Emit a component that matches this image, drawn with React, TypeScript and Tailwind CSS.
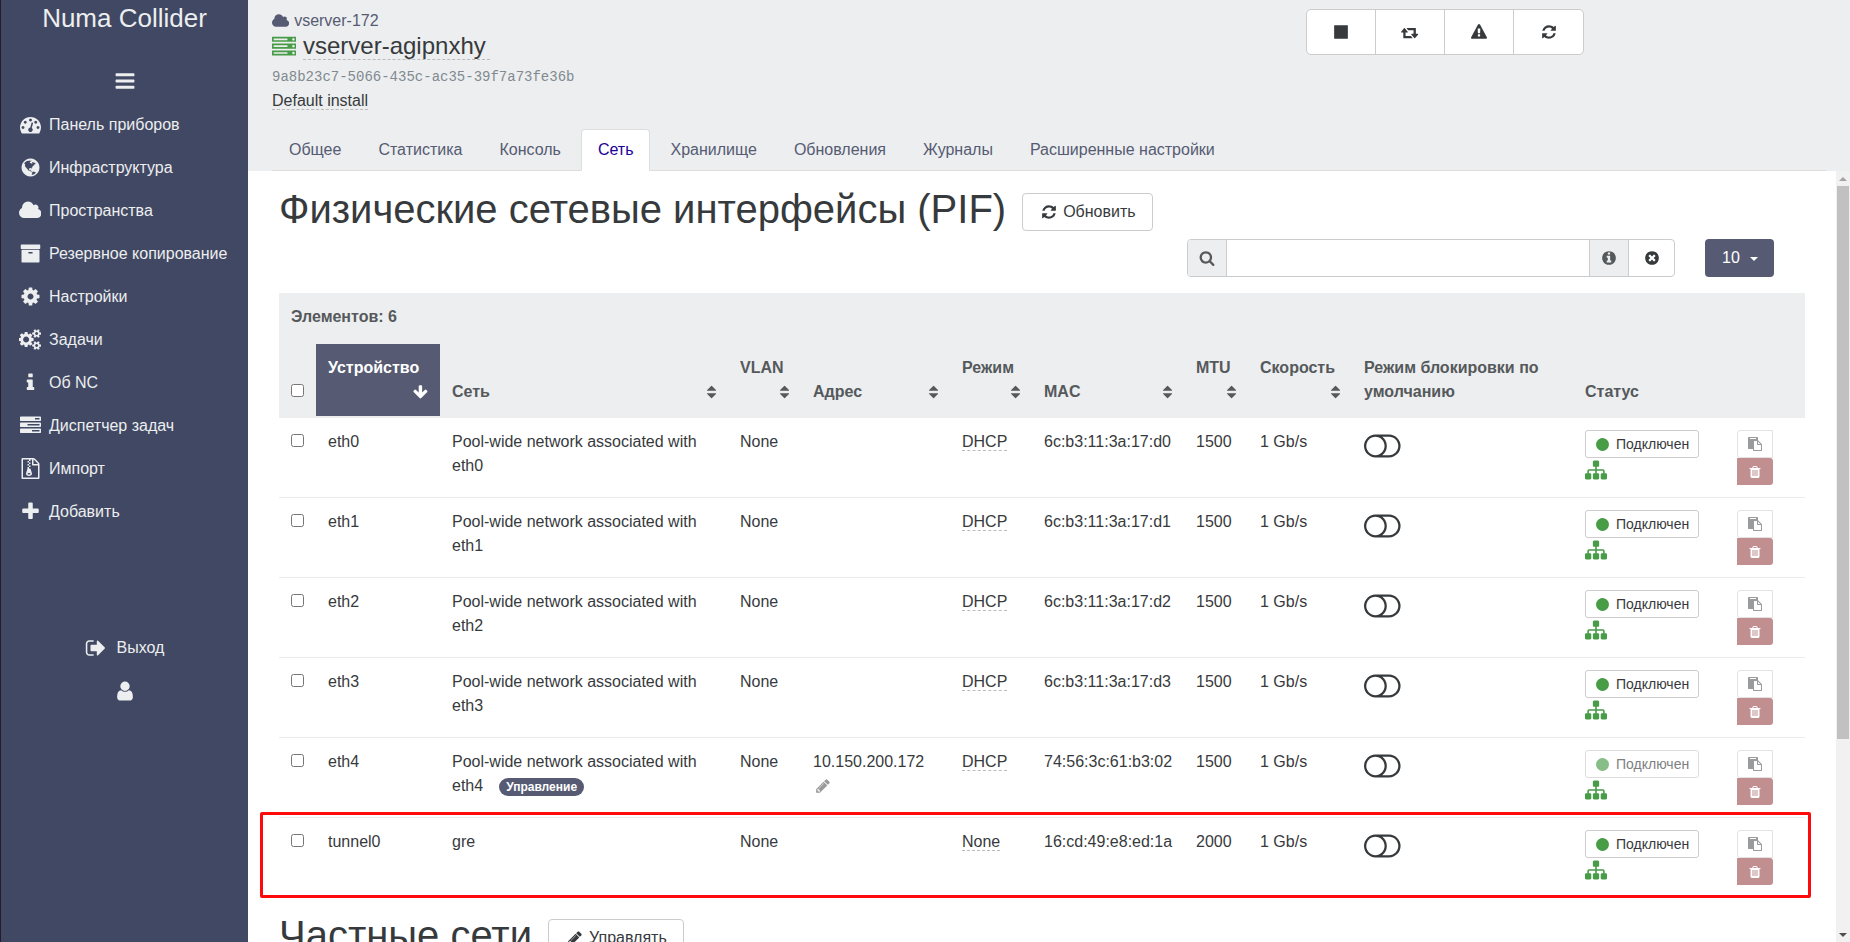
import type { ReactNode } from 'react';

// [path, left edge of the view box, width of the view box]
type Glyph = [string, number, number];

const glyphs = {
  cloud: [
    'M1984 1152q0 159-112.5 271.5t-271.5 112.5h-1088q-185 0-316.5-131.5t-131.5-316.5q0-132 71-241.5t187-163.5q-2-28-2-43 0-212 150-362t362-150q158 0 286.5 88t187.5 230q70-62 166-62 106 0 181 75t75 181q0 75-41 138 129 30 213 134.5t84 239.5z',
    64, 1920,
  ],
  refresh: [
    'M1639 1056q0 5-1 7-64 268-268 434.5t-478 166.5q-146 0-282.5-55t-243.5-157l-129 129q-19 19-45 19t-45-19-19-45v-448q0-26 19-45t45-19h448q26 0 45 19t19 45-19 45l-137 137q71 66 161 102t187 36q134 0 250-65t186-179q11-17 53-117 8-23 30-23h192q13 0 22.5 9.5t9.5 22.5zm25-800v448q0 26-19 45t-45 19h-448q-26 0-45-19t-19-45 19-45l138-138q-148-137-349-137-134 0-250 65t-186 179q-11 17-53 117-8 23-30 23h-199q-13 0-22.5-9.5t-9.5-22.5v-7q65-268 270-434.5t480-166.5q146 0 284 55.5t245 156.5l130-129q19-19 45-19t45 19 19 45z',
    0, 1792,
  ],
  search: [
    'M1216 832q0-185-131.5-316.5t-316.5-131.5-316.5 131.5-131.5 316.5 131.5 316.5 316.5 131.5 316.5-131.5 131.5-316.5zm512 832q0 52-38 90t-90 38q-54 0-90-38l-343-342q-179 124-399 124-143 0-273.5-55.5t-225-150-150-225-55.5-273.5 55.5-273.5 150-225 225-150 273.5-55.5 273.5 55.5 225 150 150 225 55.5 273.5q0 220-124 399l343 343q37 37 37 90z',
    0, 1792,
  ],
  cog: [
    'M1152 896q0-106-75-181t-181-75-181 75-75 181 75 181 181 75 181-75 75-181zm512-109v222q0 12-8 23t-20 13l-185 28q-19 54-39 91 35 50 107 138 10 12 10 25t-9 23q-27 37-99 108t-94 71q-12 0-26-9l-138-108q-44 23-91 38-16 136-29 186-7 28-36 28h-222q-14 0-24.5-8.5t-11.5-21.5l-28-184q-49-16-90-37l-141 107q-10 9-25 9-14 0-25-11-126-114-165-168-7-10-7-23 0-12 8-23 15-21 51-66.5t54-70.5q-27-50-41-99l-183-27q-13-2-21-12.5t-8-23.5v-222q0-12 8-23t19-13l186-28q14-46 39-92-40-57-107-138-10-12-10-24 0-10 9-23 26-36 98.5-107.5t94.5-71.5q13 0 26 10l138 107q44-23 91-38 16-136 29-186 7-28 36-28h222q14 0 24.5 8.5t11.5 21.5l28 184q49 16 90 37l142-107q9-9 24-9 13 0 25 10 129 119 165 170 7 8 7 22 0 12-8 23-15 21-51 66.5t-54 70.5q26 50 41 98l183 28q13 2 21 12.5t8 23.5z',
    0, 1792,
  ],
  dashboard: [
    'M384 1152q0-53-37.5-90.5t-90.5-37.5-90.5 37.5-37.5 90.5 37.5 90.5 90.5 37.5 90.5-37.5 37.5-90.5zm192-448q0-53-37.5-90.5t-90.5-37.5-90.5 37.5-37.5 90.5 37.5 90.5 90.5 37.5 90.5-37.5 37.5-90.5zm428 481l101-382q6-26-7.5-48.5t-38.5-29.5-48 6.5-30 39.5l-101 382q-60 5-107 43.5t-63 98.5q-20 77 20 146t117 89 146-20 89-117q16-60-6-117t-72-91zm660-33q0-53-37.5-90.5t-90.5-37.5-90.5 37.5-37.5 90.5 37.5 90.5 90.5 37.5 90.5-37.5 37.5-90.5zm-640-640q0-53-37.5-90.5t-90.5-37.5-90.5 37.5-37.5 90.5 37.5 90.5 90.5 37.5 90.5-37.5 37.5-90.5zm448 192q0-53-37.5-90.5t-90.5-37.5-90.5 37.5-37.5 90.5 37.5 90.5 90.5 37.5 90.5-37.5 37.5-90.5zm320 448q0 261-141 483-19 29-54 29h-1402q-35 0-54-29-141-221-141-483 0-182 71-348t191-286 286-191 348-71 348 71 286 191 191 286 71 348z',
    0, 1792,
  ],
  globe: [
    'M896 128q209 0 385.5 103t279.5 279.5 103 385.5-103 385.5-279.5 279.5-385.5 103-385.5-103-279.5-279.5-103-385.5 103-385.5 279.5-279.5 385.5-103zm274 521q-2 1-9.5 9.5t-13.5 9.5q2 0 4.5-5t5-11 3.5-7q6-7 22-15 14-6 52-12 34-8 51 11-2-2 9.5-13t14.5-12q3-2 15-4.5t15-7.5l2-22q-12 1-17.5-7t-6.5-21q0 2-6 8 0-7-4.5-8t-11.5 1-9 1q-10-3-15-7.5t-8-16.5-4-15q-2-5-9.5-11t-9.5-10q-1-2-2.5-5.5t-3-6.5-4-5.5-5.5-2.5-7 5-7.5 10-4.5 5q-3-2-6-1.5t-4.5 1-4.5 3-5 3.5q-3 2-8.5 3t-8.5 2q15-5-1-11-10-4-16-3 9-4 7.5-12t-8.5-14h5q-1-4-8.5-8.5t-17.5-8.5-13-6q-8-5-34-9.5t-33-.5q-5 6-4.5 10.5t4 14 3.5 12.5q1 6-5.5 13t-6.5 12q0 7 14 15.5t10 21.5q-3 8-16 16t-16 12q-5 8-1.5 18.5t10.5 16.5q2 2 1.5 4t-3.5 4.5-5.5 4-6.5 3.5l-3 2q-11 5-20.5-6t-13.5-26q-7-25-16-30-23-8-29 1-5-13-41-26-25-9-58-4 6-1 0-15-7-15-19-12 3-6 4-17.5t1-13.5q3-13 12-23 1-1 7-8.5t9.5-13.5.5-6q35 4 50-11 5-5 11.5-17t10.5-17q9-6 14-5.5t14.5 5.5 14.5 5q14 1 15.5-11t-7.5-20q12 1 3-17-4-7-8-9-12-4-27 5-8 4 2 8-1-1-9.5 10.5t-16.5 17.5-16-5q-1-1-5.5-13.5t-9.5-13.5q-8 0-16 15 3-8-11-15t-24-8q19-12-8-27-7-4-20.5-5t-19.5 4q-5 7-5.5 11.5t5 8 10.5 5.5 11.5 4 8.5 3q14 10 8 14-2 1-8.5 3.5t-11.5 4.5-6 4q-3 4 0 14t-2 14q-5-5-9-17.5t-7-16.5q7 9-25 6l-10-1q-4 0-16 2t-20.5 1-13.5-8q-4-8 0-20 1-4 4-2-4-3-11-9.5t-10-8.5q-46 15-94 41 6 1 12-1 5-2 13-6.5t10-5.5q34-14 42-7l5-5q14 16 20 25-7-4-30-1-20 6-22 12 7 12 5 18-4-3-11.5-10t-14.5-11-15-5q-16 0-22 1-146 80-235 222 7 7 12 8 4 1 5 9t2.5 11 11.5-3q9 8 3 19 1-1 44 27 19 17 21 21 3 11-10 18-1-2-9-9t-9-4q-3 5 .5 18.5t10.5 12.5q-7 0-9.5 16t-2.5 35.5-1 23.5l2 1q-3 12 5.5 34.5t21.5 19.5q-13 3 20 43 6 8 8 9 3 2 12 7.5t15 10 10 10.5q4 5 10 22.5t14 23.5q-2 6 9.5 20t10.5 23q-1 0-2.5 1t-2.5 1q3 7 15.5 14t15.5 13q1 3 2 10t3 11 8 2q2-20-24-62-15-25-17-29-3-5-5.5-15.5t-4.5-14.5q2 0 6 1.5t8.5 3.5 7.5 4 2 3q-3 7 2 17.5t12 18.5 17 19 12 13q6 6 14 19.5t0 13.5q9 0 20 10.5t17 19.5q5 8 8 26t5 24q2 7 8.5 13.5t12.5 9.5l16 8 13 7q5 2 18.5 10.5t21.5 11.5q10 4 16 4t14.5-2.5 13.5-3.5q15-2 29 15t21 21q36 19 55 11-2 1 .5 7.5t8 15.5 9 14.5 5.5 8.5q5 6 18 15t18 15q6-4 7-9-3 8 7 20t18 10q14-3 14-32-31 15-49-18 0-1-2.5-5.5t-4-8.5-2.5-8.5 0-7.5 5-3q9 0 10-3.5t-2-12.5-4-13q-1-8-11-20t-12-15q-5 9-16 8t-16-9q0 1-1.5 5.5t-1.5 6.5q-13 0-15-1 1-3 2.5-17.5t3.5-22.5q1-4 5.5-12t7.5-14.5 4-12.5-4.5-9.5-17.5-2.5q-19 1-26 20-1 3-3 10.5t-5 11.5-9 7q-7 3-24 2t-24-5q-13-8-22.5-29t-9.5-37q0-10 2.5-26.5t3-25-5.5-24.5q3-2 9-9.5t10-10.5q2-1 4.5-1.5t4.5 0 4-1.5 3-6q-1-1-4-3-3-3-4-3 7 3 28.5-1.5t27.5 1.5q15 11 22-2 0-1-2.5-9.5t-.5-13.5q5 27 29 9 3 3 15.5 5t17.5 5q3 2 7 5.5t5.5 4.5 5-.5 8.5-6.5q10 14 12 24 11 40 19 44 7 3 11 2t4.5-9.5 0-14-1.5-12.5l-1-8v-18l-1-8q-15-3-18.5-12t1.5-18.5 15-18.5q1-1 8-3.5t15.5-6.5 12.5-8q21-19 15-35 7 0 11-9-1 0-5-3t-7.5-5-4.5-2q9-5 2-16 5-3 7.5-11t7.5-10q9 12 21 2 7-8 1-16 5-7 20.5-10.5t18.5-9.5q7 2 8-2t1-12 3-12q4-5 15-9t13-5l17-11q3-4 0-4 18 2 31-11 10-11-6-20 3-6-3-9.5t-15-5.5q3-1 11.5-.5t10.5-1.5q15-10-7-16-17-5-43 12zm-163 877q206-36 351-189-3-3-12.5-4.5t-12.5-3.5q-18-7-24-8 1-7-2.5-13t-8-9-12.5-8-11-7q-2-2-7-6t-7-5.5-7.5-4.5-8.5-2-10 1l-3 1q-3 1-5.5 2.5t-5.5 3-4 3 0 2.5q-21-17-36-22-5-1-11-5.5t-10.5-7-10-1.5-11.5 7q-5 5-6 15t-2 13q-7-5 0-17.5t2-18.5q-3-6-10.5-4.5t-12 4.5-11.5 8.5-9 6.5-8.5 5.5-8.5 7.5q-3 4-6 12t-5 11q-2-4-11.5-6.5t-9.5-5.5q2 10 4 35t5 38q7 31-12 48-27 25-29 40-4 22 12 26 0 7-8 20.5t-7 21.5q0 6 2 16z',
    0, 1792,
  ],
  server: [
    'M128 1408h1024v-128h-1024v128zm0-512h1024v-128h-1024v128zm1568 448q0-40-28-68t-68-28-68 28-28 68 28 68 68 28 68-28 28-68zm-1568-960h1024v-128h-1024v128zm1568 448q0-40-28-68t-68-28-68 28-28 68 28 68 68 28 68-28 28-68zm0-512q0-40-28-68t-68-28-68 28-28 68 28 68 68 28 68-28 28-68zm96 832v384h-1792v-384h1792zm0-512v384h-1792v-384h1792zm0-512v384h-1792v-384h1792z',
    0, 1792,
  ],
  tasks: [
    'M1024 1408h640v-128h-640v128zm-384-512h1024v-128h-1024v128zm640-512h384v-128h-384v128zm512 832v256q0 26-19 45t-45 19h-1664q-26 0-45-19t-19-45v-256q0-26 19-45t45-19h1664q26 0 45 19t19 45zm0-512v256q0 26-19 45t-45 19h-1664q-26 0-45-19t-19-45v-256q0-26 19-45t45-19h1664q26 0 45 19t19 45zm0-512v256q0 26-19 45t-45 19h-1664q-26 0-45-19t-19-45v-256q0-26 19-45t45-19h1664q26 0 45 19t19 45z',
    0, 1792,
  ],
  archive: [
    'M1088 832q0-26-19-45t-45-19h-256q-26 0-45 19t-19 45 19 45 45 19h256q26 0 45-19t19-45zm576-192v960q0 26-19 45t-45 19h-1408q-26 0-45-19t-19-45v-960q0-26 19-45t45-19h1408q26 0 45 19t19 45zm64-448v256q0 26-19 45t-45 19h-1536q-26 0-45-19t-19-45v-256q0-26 19-45t45-19h1536q26 0 45 19t19 45z',
    0, 1792,
  ],
  cogs: [
    'M832 896q0-106-75-181t-181-75-181 75-75 181 75 181 181 75 181-75 75-181zm768 512q0-52-38-90t-90-38-90 38-38 90q0 53 37.5 90.5t90.5 37.5 90.5-37.5 37.5-90.5zm0-1024q0-52-38-90t-90-38-90 38-38 90q0 53 37.5 90.5t90.5 37.5 90.5-37.5 37.5-90.5zm-384 421v185q0 10-7 19.5t-16 10.5l-155 24q-11 35-32 76 34 48 90 115 7 11 7 20 0 12-7 19-23 30-82.5 89.5t-78.5 59.5q-11 0-21-7l-115-90q-37 19-77 31-11 108-23 155-7 24-30 24h-186q-11 0-20-7.5t-10-17.5l-23-153q-34-10-75-31l-118 89q-7 7-20 7-11 0-21-8-144-133-144-160 0-9 7-19 10-14 41-53t47-61q-23-44-35-82l-152-24q-10-1-17-9.5t-7-19.5v-185q0-10 7-19.5t16-10.5l155-24q11-35 32-76-34-48-90-115-7-11-7-20 0-12 7-20 22-30 82-89t79-59q11 0 21 7l115 90q34-18 77-32 11-108 23-154 7-24 30-24h186q11 0 20 7.5t10 17.5l23 153q34 10 75 31l118-89q8-7 20-7 11 0 21 8 144 133 144 160 0 8-7 19-12 16-42 54t-45 60q23 48 34 82l152 23q10 2 17 10.5t7 19.5zm640 533v140q0 16-149 31-12 27-30 52 51 113 51 138 0 4-4 7-122 71-124 71-8 0-46-47t-52-68q-20 2-30 2t-30-2q-14 21-52 68t-46 47q-2 0-124-71-4-3-4-7 0-25 51-138-18-25-30-52-149-15-149-31v-140q0-16 149-31 13-29 30-52-51-113-51-138 0-4 4-7 4-2 35-20t59-34 30-16q8 0 46 46.5t52 67.5q20-2 30-2t30 2q51-71 92-112l6-2q4 0 124 70 4 3 4 7 0 25-51 138 17 23 30 52 149 15 149 31zm0-1024v140q0 16-149 31-12 27-30 52 51 113 51 138 0 4-4 7-122 71-124 71-8 0-46-47t-52-68q-20 2-30 2t-30-2q-14 21-52 68t-46 47q-2 0-124-71-4-3-4-7 0-25 51-138-18-25-30-52-149-15-149-31v-140q0-16 149-31 13-29 30-52-51-113-51-138 0-4 4-7 4-2 35-20t59-34 30-16q8 0 46 46.5t52 67.5q20-2 30-2t30 2q51-71 92-112l6-2q4 0 124 70 4 3 4 7 0 25-51 138 17 23 30 52 149 15 149 31z',
    -32, 1920,
  ],
  info: [
    'M1216 1344v128q0 26-19 45t-45 19h-512q-26 0-45-19t-19-45v-128q0-26 19-45t45-19h64v-384h-64q-26 0-45-19t-19-45v-128q0-26 19-45t45-19h384q26 0 45 19t19 45v576h64q26 0 45 19t19 45zm-128-1152v192q0 26-19 45t-45 19h-256q-26 0-45-19t-19-45v-192q0-26 19-45t45-19h256q26 0 45 19t19 45z',
    0, 1792,
  ],
  fileArchive: [
    'M768 384v-128h-128v128h128zm128 128v-128h-128v128h128zm-128 128v-128h-128v128h128zm128 128v-128h-128v128h128zm700-388q28 28 48 76t20 88v1152q0 40-28 68t-68 28h-1344q-40 0-68-28t-28-68v-1600q0-40 28-68t68-28h896q40 0 88 20t76 48zm-444-244v376h376q-10-29-22-41l-313-313q-12-12-41-22zm384 1528v-1024h-416q-40 0-68-28t-28-68v-416h-128v128h-128v-128h-512v1536h1280zm-627-721l107 349q8 27 8 52 0 83-72.5 137.5t-183.5 54.5-183.5-54.5-72.5-137.5q0-25 8-52 21-63 120-396v-128h128v128h79q22 0 39 13t23 34zm-141 465q53 0 90.5-19t37.5-45-37.5-45-90.5-19-90.5 19-37.5 45 37.5 45 90.5 19z',
    0, 1792,
  ],
  plus: [
    'M1600 736v192q0 40-28 68t-68 28h-416v416q0 40-28 68t-68 28h-192q-40 0-68-28t-28-68v-416h-416q-40 0-68-28t-28-68v-192q0-40 28-68t68-28h416v-416q0-40 28-68t68-28h192q40 0 68 28t28 68v416h416q40 0 68 28t28 68z',
    0, 1792,
  ],
  signOut: [
    'M704 1440q0 4 1 20t.5 26.5-3 23.5-10 19.5-20.5 6.5h-320q-119 0-203.5-84.5t-84.5-203.5v-704q0-119 84.5-203.5t203.5-84.5h320q13 0 22.5 9.5t9.5 22.5q0 4 1 20t.5 26.5-3 23.5-10 19.5-20.5 6.5h-320q-66 0-113 47t-47 113v704q0 66 47 113t113 47h312l11.5 1 11.5 3 8 5.5 7 9 2 13.5zm928-544q0 26-19 45l-544 544q-19 19-45 19t-45-19-19-45v-288h-448q-26 0-45-19t-19-45v-384q0-26 19-45t45-19h448v-288q0-26 19-45t45-19 45 19l544 544q19 19 19 45z',
    0, 1792,
  ],
  user: [
    'M1536 1399q0 109-62.5 187t-150.5 78h-854q-88 0-150.5-78t-62.5-187q0-85 8.5-160.5t31.5-152 58.5-131 94-89 134.5-34.5q131 128 313 128t313-128q76 0 134.5 34.5t94 89 58.5 131 31.5 152 8.5 160.5zm-256-887q0 159-112.5 271.5t-271.5 112.5-271.5-112.5-112.5-271.5 112.5-271.5 271.5-112.5 271.5 112.5 112.5 271.5z',
    0, 1792,
  ],
  bars: [
    'M1664 1344v128q0 26-19 45t-45 19h-1408q-26 0-45-19t-19-45v-128q0-26 19-45t45-19h1408q26 0 45 19t19 45zm0-512v128q0 26-19 45t-45 19h-1408q-26 0-45-19t-19-45v-128q0-26 19-45t45-19h1408q26 0 45 19t19 45zm0-512v128q0 26-19 45t-45 19h-1408q-26 0-45-19t-19-45v-128q0-26 19-45t45-19h1408q26 0 45 19t19 45z',
    0, 1792,
  ],
  stop: ['M1664 192v1408q0 26-19 45t-45 19h-1408q-26 0-45-19t-19-45v-1408q0-26 19-45t45-19h1408q26 0 45 19t19 45z', 0, 1792],
  retweet: [
    'M1216 1568q0 13-9.5 22.5t-22.5 9.5h-960q-8 0-13.5-2t-9-7-5.5-8-3-11.5-1-11.5v-600h-192q-26 0-45-19t-19-45q0-24 15-41l320-384q19-22 49-22t49 22l320 384q15 17 15 41 0 26-19 45t-45 19h-192v384h576q16 0 25 11l160 192q7 10 7 21zm640-416q0 24-15 41l-320 384q-20 23-49 23t-49-23l-320-384q-15-17-15-41 0-26 19-45t45-19h192v-384h-576q-16 0-25-12l-160-192q-7-9-7-20 0-13 9.5-22.5t22.5-9.5h960q8 0 13.5 2t9 7 5.5 8 3 11.5 1 11.5v600h192q26 0 45 19t19 45z',
    -64, 1920,
  ],
  warning: [
    'M1024 1375v-190q0-14-9.5-23.5t-22.5-9.5h-192q-13 0-22.5 9.5t-9.5 23.5v190q0 14 9.5 23.5t22.5 9.5h192q13 0 22.5-9.5t9.5-23.5zm-2-374l18-459q0-12-10-19-13-11-24-11h-220q-11 0-24 11-10 7-10 21l17 457q0 10 10 16.5t24 6.5h185q14 0 23.5-6.5t10.5-16.5zm-14-934l768 1408q35 63-2 126-17 29-46.5 46t-63.5 17h-1536q-34 0-63.5-17t-46.5-46q-37-63-2-126l768-1408q17-31 47-49t65-18 65 18 47 49z',
    0, 1792,
  ],
  infoCircle: [
    'M1152 1376v-160q0-14-9-23t-23-9h-96v-512q0-14-9-23t-23-9h-320q-14 0-23 9t-9 23v160q0 14 9 23t23 9h96v320h-96q-14 0-23 9t-9 23v160q0 14 9 23t23 9h448q14 0 23-9t9-23zm-128-896v-160q0-14-9-23t-23-9h-192q-14 0-23 9t-9 23v160q0 14 9 23t23 9h192q14 0 23-9t9-23zm640 416q0 209-103 385.5t-279.5 279.5-385.5 103-385.5-103-279.5-279.5-103-385.5 103-385.5 279.5-279.5 385.5-103 385.5 103 279.5 279.5 103 385.5z',
    0, 1792,
  ],
  timesCircle: [
    'M1277 1122q0-26-19-45l-181-181 181-181q19-19 19-45 0-27-19-46l-90-90q-19-19-46-19-26 0-45 19l-181 181-181-181q-19-19-45-19-27 0-46 19l-90 90q-19 19-19 46 0 26 19 45l181 181-181 181q-19 19-19 45 0 27 19 46l90 90q19 19 46 19 26 0 45-19l181-181 181 181q19 19 45 19 27 0 46-19l90-90q19-19 19-46zm387-226q0 209-103 385.5t-279.5 279.5-385.5 103-385.5-103-279.5-279.5-103-385.5 103-385.5 279.5-279.5 385.5-103 385.5 103 279.5 279.5 103 385.5z',
    0, 1792,
  ],
  sort: [
    'M1408 1088q0 26-19 45l-448 448q-19 19-45 19t-45-19l-448-448q-19-19-19-45t19-45 45-19h896q26 0 45 19t19 45zm0-384q0 26-19 45t-45 19h-896q-26 0-45-19t-19-45 19-45l448-448q19-19 45-19t45 19l448 448q19 19 19 45z',
    384, 1024,
  ],
  arrowDown: [
    'M1675 832q0 53-37 90l-651 652q-39 37-91 37-53 0-90-37l-651-652q-38-36-38-90 0-53 38-91l74-75q39-37 91-37 53 0 90 37l294 294v-704q0-52 38-90t90-38h128q52 0 90 38t38 90v704l294-294q37-37 90-37 52 0 91 37l75 75q37 39 37 91z',
    64, 1664,
  ],
  toggleOff: [
    'M1152 896q0-104-40.5-198.5t-109.5-163.5-163.5-109.5-198.5-40.5-198.5 40.5-163.5 109.5-109.5 163.5-40.5 198.5 40.5 198.5 109.5 163.5 163.5 109.5 198.5 40.5 198.5-40.5 163.5-109.5 109.5-163.5 40.5-198.5zm768 0q0-104-40.5-198.5t-109.5-163.5-163.5-109.5-198.5-40.5h-386q119 90 188.5 224t69.5 288-69.5 288-188.5 224h386q104 0 198.5-40.5t163.5-109.5 109.5-163.5 40.5-198.5zm128 0q0 130-51 248.5t-136.5 204-204 136.5-248.5 51h-768q-130 0-248.5-51t-204-136.5-136.5-204-51-248.5 51-248.5 136.5-204 204-136.5 248.5-51h768q130 0 248.5 51t204 136.5 136.5 204 51 248.5z',
    0, 2048,
  ],
  sitemap: [
    'M1792 1248v320q0 40-28 68t-68 28h-320q-40 0-68-28t-28-68v-320q0-40 28-68t68-28h96v-192h-512v192h96q40 0 68 28t28 68v320q0 40-28 68t-68 28h-320q-40 0-68-28t-28-68v-320q0-40 28-68t68-28h96v-192h-512v192h96q40 0 68 28t28 68v320q0 40-28 68t-68 28h-320q-40 0-68-28t-28-68v-320q0-40 28-68t68-28h96v-192q0-52 38-90t90-38h512v-192h-96q-40 0-68-28t-28-68v-320q0-40 28-68t68-28h320q40 0 68 28t28 68v320q0 40-28 68t-68 28h-96v192h512q52 0 90 38t38 90v192h96q40 0 68 28t28 68z',
    0, 1792,
  ],
  clipboard: [
    'M768 1664h896v-640h-416q-40 0-68-28t-28-68v-416h-384v1152zm256-1440v-64q0-13-9.5-22.5t-22.5-9.5h-704q-13 0-22.5 9.5t-9.5 22.5v64q0 13 9.5 22.5t22.5 9.5h704q13 0 22.5-9.5t9.5-22.5zm256 672h299l-299-299v299zm512 128v672q0 40-28 68t-68 28h-960q-40 0-68-28t-28-68v-160h-544q-40 0-68-28t-28-68v-1344q0-40 28-68t68-28h1088q40 0 68 28t28 68v328q21 13 36 28l408 408q28 28 48 76t20 88z',
    0, 1792,
  ],
  trash: [
    'M704 1376v-704q0-14-9-23t-23-9h-64q-14 0-23 9t-9 23v704q0 14 9 23t23 9h64q14 0 23-9t9-23zm256 0v-704q0-14-9-23t-23-9h-64q-14 0-23 9t-9 23v704q0 14 9 23t23 9h64q14 0 23-9t9-23zm256 0v-704q0-14-9-23t-23-9h-64q-14 0-23 9t-9 23v704q0 14 9 23t23 9h64q14 0 23-9t9-23zm-544-992h448l-48-117q-7-9-17-11h-317q-10 2-17 11zm928 32v64q0 14-9 23t-23 9h-96v948q0 83-47 143.5t-113 60.5h-832q-66 0-113-58.5t-47-141.5v-952h-96q-14 0-23-9t-9-23v-64q0-14 9-23t23-9h309l70-167q15-37 54-63t79-26h320q40 0 79 26t54 63l70 167h309q14 0 23 9t9 23z',
    0, 1792,
  ],
  pencil: [
    'M491 1536l91-91-235-235-91 91v107h128v128h107zm523-928q0-22-22-22-10 0-17 7l-542 542q-7 7-7 17 0 22 22 22 10 0 17-7l542-542q7-7 7-17zm-54-192l416 416-832 832h-416v-416zm683 96q0 53-37 90l-166 166-416-416 166-165q36-38 90-38 53 0 91 38l235 234q37 39 37 91z',
    0, 1792,
  ],
  circle: [
    'M1664 896q0 209-103 385.5t-279.5 279.5-385.5 103-385.5-103-279.5-279.5-103-385.5 103-385.5 279.5-279.5 385.5-103 385.5 103 279.5 279.5 103 385.5z',
    0, 1792,
  ],
} satisfies Record<string, Glyph>;

type IconName = keyof typeof glyphs;

function Icon({ name, className }: { name: IconName; className: string }) {
  const [d, x, width] = glyphs[name];
  return (
    <svg
      viewBox={`${x} 0 ${width} 1792`}
      fill="currentColor"
      aria-hidden="true"
      className={`w-auto shrink-0 ${className}`}
    >
      <path d={d} />
    </svg>
  );
}

const menu: { icon: IconName; label: string }[] = [
  { icon: 'dashboard', label: 'Панель приборов' },
  { icon: 'globe', label: 'Инфраструктура' },
  { icon: 'cloud', label: 'Пространства' },
  { icon: 'archive', label: 'Резервное копирование' },
  { icon: 'cog', label: 'Настройки' },
  { icon: 'cogs', label: 'Задачи' },
  { icon: 'info', label: 'Об NC' },
  { icon: 'tasks', label: 'Диспетчер задач' },
  { icon: 'fileArchive', label: 'Импорт' },
  { icon: 'plus', label: 'Добавить' },
];

const tabs = [
  'Общее',
  'Статистика',
  'Консоль',
  'Сеть',
  'Хранилище',
  'Обновления',
  'Журналы',
  'Расширенные настройки',
];

const hostActions: { icon: IconName; label: string }[] = [
  { icon: 'stop', label: 'Остановить' },
  { icon: 'retweet', label: 'Перезапустить сервисы' },
  { icon: 'warning', label: 'Аварийный режим' },
  { icon: 'refresh', label: 'Перезагрузить' },
];

const columns = [
  { label: 'Сеть', sortable: true },
  { label: 'VLAN', sortable: true },
  { label: 'Адрес', sortable: true },
  { label: 'Режим', sortable: true },
  { label: 'MAC', sortable: true },
  { label: 'MTU', sortable: true },
  { label: 'Скорость', sortable: true },
  { label: 'Режим блокировки по умолчанию', sortable: false },
  { label: 'Статус', sortable: false },
];

interface Pif {
  device: string;
  network: string;
  address?: string;
  mode: string;
  mac: string;
  mtu: number;
  management?: boolean;
}

const pifs: Pif[] = [
  { device: 'eth0', network: 'Pool-wide network associated with eth0', mode: 'DHCP', mac: '6c:b3:11:3a:17:d0', mtu: 1500 },
  { device: 'eth1', network: 'Pool-wide network associated with eth1', mode: 'DHCP', mac: '6c:b3:11:3a:17:d1', mtu: 1500 },
  { device: 'eth2', network: 'Pool-wide network associated with eth2', mode: 'DHCP', mac: '6c:b3:11:3a:17:d2', mtu: 1500 },
  { device: 'eth3', network: 'Pool-wide network associated with eth3', mode: 'DHCP', mac: '6c:b3:11:3a:17:d3', mtu: 1500 },
  {
    device: 'eth4',
    network: 'Pool-wide network associated with eth4',
    address: '10.150.200.172',
    mode: 'DHCP',
    mac: '74:56:3c:61:b3:02',
    mtu: 1500,
    management: true,
  },
  { device: 'tunnel0', network: 'gre', mode: 'None', mac: '16:cd:49:e8:ed:1a', mtu: 2000 },
];

function Sidebar() {
  return (
    <nav className="w-[248px] shrink-0 bg-[#414863] border-l border-[#221c2c] text-[#eceeef]">
      <a href="#" className="block text-center text-[26px] leading-9">
        Numa Collider
      </a>
      <button type="button" aria-label="Свернуть меню" className="flex w-full justify-center pt-[34px] pb-[11px]">
        <Icon name="bars" className="h-[22px]" />
      </button>
      <ul>
        {menu.map(item => (
          <li key={item.label}>
            <a href="#" className="flex h-[43px] items-center gap-1.5 px-4">
              <span className="flex w-[26px] justify-center">
                <Icon name={item.icon} className="h-[21px]" />
              </span>
              {item.label}
            </a>
          </li>
        ))}
      </ul>
      <ul className="mt-[93px]">
        <li>
          <a href="#" className="flex h-[43px] items-center justify-center gap-2.5">
            <Icon name="signOut" className="h-[22px]" />
            Выход
          </a>
        </li>
        <li>
          <a href="#" aria-label="Пользователь" className="flex h-[43px] items-center justify-center">
            <Icon name="user" className="h-[22px]" />
          </a>
        </li>
      </ul>
    </nav>
  );
}

function Editable({ children }: { children: ReactNode }) {
  return <span className="border-b border-dashed border-[#bbbbbb]">{children}</span>;
}

function Header() {
  return (
    <header className="bg-[#eceeef] px-6 pt-[9px]">
      <div className="flex">
        <div className="flex-1">
          <a href="#" className="flex items-center gap-[5px] leading-6 text-[#565b73]">
            <Icon name="cloud" className="h-4" />
            vserver-172
          </a>
          <h2 className="flex items-center gap-[7px] text-2xl leading-[26px]">
            <Icon name="server" className="h-6 text-[#489c48]" />
            <span className="border-b border-dashed border-[#bbbbbb] pr-1">vserver-agipnxhy</span>
          </h2>
          <p className="mt-[5px] font-['Liberation_Mono',monospace] text-sm leading-6 text-[#818a91]">
            9a8b23c7-5066-435c-ac35-39f7a73fe36b
          </p>
          <p className="leading-6">
            <Editable>Default install</Editable>
          </p>
        </div>
        <div className="flex flex-1">
          <div className="ml-[257px] flex h-[46px] divide-x divide-[#cccccc] overflow-hidden rounded-[5px] border border-[#cccccc] bg-white">
            {hostActions.map(action => (
              <button key={action.label} type="button" aria-label={action.label} className="flex w-[69px] items-center justify-center">
                <Icon name={action.icon} className="h-4" />
              </button>
            ))}
          </div>
        </div>
      </div>
      <nav className="mt-4 flex gap-[3px] border-b border-[#dddddd]">
        {tabs.map(tab => (
          <a
            key={tab}
            href="#"
            className={
              tab === 'Сеть'
                ? '-mb-px rounded-t border border-[#dddddd] border-b-white bg-white px-4 py-2 text-[#1c0099]'
                : '-mb-px border border-transparent px-4 py-2 text-[#565b73]'
            }
          >
            {tab}
          </a>
        ))}
      </nav>
    </header>
  );
}

function SectionTitle({ title, icon, action }: { title: string; icon: IconName; action: string }) {
  return (
    <div className="flex items-center gap-4">
      <h1 className="text-[40px] leading-[44px]">{title}</h1>
      <button
        type="button"
        className="mt-1.5 flex h-[38px] items-center gap-1 rounded border border-[#cccccc] bg-white px-4"
      >
        <span className="flex w-5 justify-center">
          <Icon name={icon} className="h-4" />
        </span>
        {action}
      </button>
    </div>
  );
}

function Toolbar() {
  return (
    <div className="mb-4 flex justify-end gap-[30px] pr-[31px]">
      <div className="flex h-[38px] w-[488px] overflow-hidden rounded border border-[#cccccc]">
        <label htmlFor="filter" className="flex w-[38px] items-center justify-center bg-[#eceeef] text-[#55595c]">
          <Icon name="search" className="h-4" />
        </label>
        <input id="filter" type="text" aria-label="Фильтр" className="min-w-0 flex-1 border-x border-[#cccccc] px-3 outline-none" />
        <button type="button" aria-label="Синтаксис" className="flex w-[38px] items-center justify-center bg-[#eceeef] text-[#55595c]">
          <Icon name="infoCircle" className="h-4" />
        </button>
        <button type="button" aria-label="Очистить" className="flex w-[46px] items-center justify-center border-l border-[#cccccc]">
          <Icon name="timesCircle" className="h-4" />
        </button>
      </div>
      <div className="relative">
        <select
          aria-label="Элементов на странице"
          className="h-[38px] w-[69px] appearance-none rounded bg-[#565b73] pl-[17px] text-white"
          defaultValue="10"
        >
          <option>10</option>
          <option>20</option>
          <option>50</option>
        </select>
        <svg viewBox="0 0 10 5" className="pointer-events-none absolute right-4 top-[18px] h-1 w-2 fill-white" aria-hidden="true">
          <path d="M0 0h10L5 5z" />
        </svg>
      </div>
    </div>
  );
}

function PifRow({ pif }: { pif: Pif }) {
  return (
    <tr className="align-top [&>td]:border-t [&>td]:border-[#e9ebec] first:[&>td]:border-t-0">
      <td className="px-3 py-4">
        <input type="checkbox" aria-label={pif.device} className="block size-[13px]" />
      </td>
      <td className="px-3 py-3">{pif.device}</td>
      <td className="px-3 py-3">
        {pif.network}
        {pif.management && (
          <span className="ml-4 inline-block rounded-full bg-[#565b73] px-[7px] text-xs leading-[18px] font-bold text-white">
            Управление
          </span>
        )}
      </td>
      <td className="px-3 py-3">None</td>
      <td className="px-3 py-3">
        {pif.address}
        {pif.address && (
          <button type="button" aria-label="Изменить адрес" className="flex h-6 items-center pl-0.5 text-[#999999]">
            <Icon name="pencil" className="h-4" />
          </button>
        )}
      </td>
      <td className="px-3 py-3">
        <Editable>{pif.mode}</Editable>
      </td>
      <td className="px-3 py-3">{pif.mac}</td>
      <td className="px-3 py-3">{pif.mtu}</td>
      <td className="px-3 py-3">1 Gb/s</td>
      <td className="px-3 py-3">
        <button type="button" role="switch" aria-checked="false" aria-label="Режим блокировки" className="block">
          <Icon name="toggleOff" className="h-8" />
        </button>
      </td>
      <td className="px-3 py-3">
        <button
          type="button"
          disabled={pif.management}
          className="flex h-7 items-center gap-1.5 rounded-[3px] border border-[#cccccc] bg-white px-[9px] text-sm disabled:opacity-65"
        >
          <Icon name="circle" className="h-[15px] text-[#489c48]" />
          Подключен
        </button>
        <Icon name="sitemap" className="mt-px h-[22px] text-[#489c48]" />
      </td>
      <td className="px-3 py-3">
        <button
          type="button"
          disabled
          aria-label="Копировать"
          className="flex h-7 w-9 items-center justify-center rounded-l-[3px] border border-[#e3e3e3] bg-white text-[#999b9c]"
        >
          <Icon name="clipboard" className="h-3.5" />
        </button>
        <button
          type="button"
          disabled
          aria-label="Удалить"
          className="flex h-[27px] w-9 items-center justify-center rounded-r-[3px] bg-[#c28f90] text-white"
        >
          <Icon name="trash" className="h-3.5" />
        </button>
      </td>
    </tr>
  );
}

function PifTable() {
  return (
    <div className="relative">
      <table className="w-full table-fixed border-separate border-spacing-0 text-left">
        <colgroup>
          <col className="w-[37px]" />
          <col className="w-[124px]" />
          <col />
          <col className="w-[73px]" />
          <col className="w-[149px]" />
          <col className="w-[82px]" />
          <col className="w-[152px]" />
          <col className="w-[64px]" />
          <col className="w-[104px]" />
          <col className="w-[221px]" />
          <col className="w-[152px]" />
          <col className="w-[80px]" />
        </colgroup>
        <thead className="bg-[#eceeef] text-[#55595c]">
          <tr className="h-[51px] align-top">
            <th colSpan={12} className="px-3 pt-3">
              Элементов: 6
            </th>
          </tr>
          <tr className="h-[74px] align-bottom">
            <th className="px-3 pb-[21px]">
              <input type="checkbox" aria-label="Выбрать все" className="block size-[13px]" />
            </th>
            <th className="border-b-2 border-[#eceeef] bg-[#565b73] px-3 pb-3 text-white">
              <span className="flex flex-wrap items-center">
                Устройство
                <span className="ml-auto flex h-6 items-center">
                  <Icon name="arrowDown" className="h-4" />
                </span>
              </span>
            </th>
            {columns.map(column => (
              <th key={column.label} className="px-3 pb-3.5">
                <span className="flex flex-wrap items-center">
                  {column.label}
                  {column.sortable && (
                    <span className="ml-auto flex h-6 items-center">
                      <Icon name="sort" className="h-4" />
                    </span>
                  )}
                </span>
              </th>
            ))}
            <th />
          </tr>
        </thead>
        <tbody>
          {pifs.map(pif => (
            <PifRow key={pif.device} pif={pif} />
          ))}
        </tbody>
      </table>
      {/* frame around the tunnel row */}
      <div className="pointer-events-none absolute -bottom-px -left-[19px] -right-1.5 h-[86px] rounded-[2px] border-3 border-[#ff0a0a]" />
    </div>
  );
}

function Scrollbar() {
  return (
    <div className="flex w-3.5 shrink-0 flex-col items-center bg-[#f1f1f1]" aria-hidden="true">
      <svg viewBox="0 0 14 15" className="h-[15px] w-3.5 fill-[#a3a3a3]">
        <path d="M7 6l4 4H3z" />
      </svg>
      <div className="w-3 flex-[553] bg-[#c1c1c1]" />
      <div className="flex-[188]" />
      <svg viewBox="0 0 14 15" className="h-[15px] w-3.5 fill-[#505050]">
        <path d="M7 10l4-4H3z" />
      </svg>
    </div>
  );
}

export default function App() {
  return (
    <div className="flex h-screen overflow-hidden bg-white font-['Liberation_Sans',Arial,sans-serif] text-base text-[#373a3c]">
      <Sidebar />
      <div className="flex min-w-0 flex-1 flex-col">
        <Header />
        <div className="flex min-h-0 flex-1">
          <main className="min-w-0 flex-1 overflow-hidden px-[31px] pt-4">
            <SectionTitle title="Физические сетевые интерфейсы (PIF)" icon="refresh" action="Обновить" />
            <div className="mt-2">
              <Toolbar />
            </div>
            <PifTable />
            <div className="mt-4">
              <SectionTitle title="Частные сети" icon="pencil" action="Управлять" />
            </div>
          </main>
          <Scrollbar />
        </div>
      </div>
    </div>
  );
}
